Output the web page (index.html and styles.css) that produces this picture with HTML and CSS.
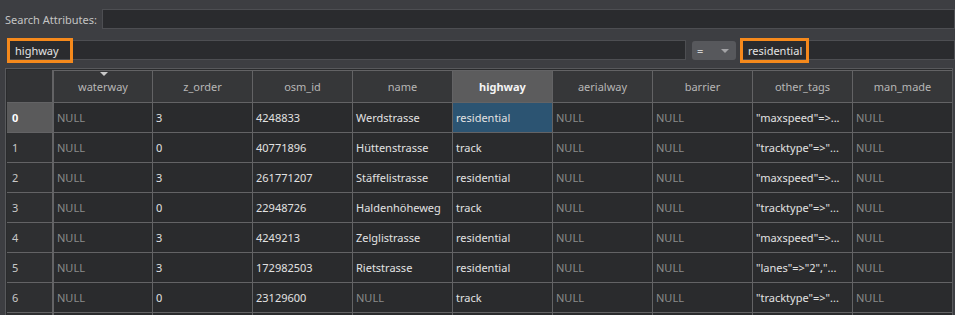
FILE: index.html
```
<!doctype html>
<html>
    <head>
        <title>Attribute table</title>
        <meta charset="utf-8">
        <link rel="stylesheet" href="styles.css">
    </head>

    <body>
        <div class="search-row">
            <label class="search-label">Search Attributes:</label>
            <div class="field"></div>
        </div>

        <div class="filter-row">
            <div class="field field-column"><span class="mark mark-column">highway</span></div>
            <div class="combo"><span>=</span><i class="combo-arrow"></i></div>
            <div class="field field-value"><span class="mark mark-value">residential</span></div>
        </div>

        <div class="table-frame">
            <table class="attr-table">
                <thead>
                    <tr>
                        <th class="corner"></th>
                        <th class="sorted">waterway</th>
                        <th>z_order</th>
                        <th>osm_id</th>
                        <th>name</th>
                        <th class="current">highway</th>
                        <th>aerialway</th>
                        <th>barrier</th>
                        <th>other_tags</th>
                        <th>man_made</th>
                    </tr>
                </thead>
                <tbody>
                    <tr>
                        <th class="current">0</th>
                        <td class="null">NULL</td><td>3</td><td>4248833</td><td>Werdstrasse</td>
                        <td class="selected">residential</td><td class="null">NULL</td><td class="null">NULL</td>
                        <td>"maxspeed"=&gt;...</td><td class="null">NULL</td>
                    </tr>
                    <tr>
                        <th>1</th>
                        <td class="null">NULL</td><td>0</td><td>40771896</td><td>Hüttenstrasse</td>
                        <td>track</td><td class="null">NULL</td><td class="null">NULL</td>
                        <td>"tracktype"=&gt;"...</td><td class="null">NULL</td>
                    </tr>
                    <tr>
                        <th>2</th>
                        <td class="null">NULL</td><td>3</td><td>261771207</td><td>Stäffelistrasse</td>
                        <td>residential</td><td class="null">NULL</td><td class="null">NULL</td>
                        <td>"maxspeed"=&gt;...</td><td class="null">NULL</td>
                    </tr>
                    <tr>
                        <th>3</th>
                        <td class="null">NULL</td><td>0</td><td>22948726</td><td>Haldenhöheweg</td>
                        <td>track</td><td class="null">NULL</td><td class="null">NULL</td>
                        <td>"tracktype"=&gt;"...</td><td class="null">NULL</td>
                    </tr>
                    <tr>
                        <th>4</th>
                        <td class="null">NULL</td><td>3</td><td>4249213</td><td>Zelglistrasse</td>
                        <td>residential</td><td class="null">NULL</td><td class="null">NULL</td>
                        <td>"maxspeed"=&gt;...</td><td class="null">NULL</td>
                    </tr>
                    <tr>
                        <th>5</th>
                        <td class="null">NULL</td><td>3</td><td>172982503</td><td>Rietstrasse</td>
                        <td>residential</td><td class="null">NULL</td><td class="null">NULL</td>
                        <td>"lanes"=&gt;"2","...</td><td class="null">NULL</td>
                    </tr>
                    <tr>
                        <th>6</th>
                        <td class="null">NULL</td><td>0</td><td>23129600</td><td class="null">NULL</td>
                        <td>track</td><td class="null">NULL</td><td class="null">NULL</td>
                        <td>"tracktype"=&gt;"...</td><td class="null">NULL</td>
                    </tr>
                    <tr class="clipped">
                        <th></th>
                        <td></td><td></td><td></td><td></td>
                        <td></td><td></td><td></td>
                        <td></td><td></td>
                    </tr>
                </tbody>
            </table>
        </div>
    </body>
</html>
```

FILE: styles.css
```
body{
    margin: 0;
    padding: 0;
    height: 315px;
    overflow: hidden;
    background: #3d3e42;
    color: #dcdcdc;
    font-family: "Noto Sans", "Open Sans", sans-serif;
    font-size: 11px;
}

.search-row{
    display: flex;
    align-items: center;
    padding: 9px 0 0 5px;
}

.search-label{
    width: 97px;
    white-space: nowrap;
    color: #c4c4c4;
}

.field{
    flex: 1;
    height: 18px;
    border: 1px solid #4d4e52;
    background: #2a2b2e;
    display: flex;
    align-items: center;
}

.filter-row{
    display: flex;
    align-items: center;
    gap: 6px;
    margin-top: 11px;
    padding-left: 7px;
}

.field-column{
    flex: none;
    width: 677px;
}

.field-value{
    margin-left: -2px;
}

.mark{
    flex: none;
    height: 19px;
    line-height: 19px;
    padding-left: 5px;
    margin-left: -1px;
    border: 3px solid #f5891c;
    color: #e4e4e4;
}

.mark-column{
    padding-right: 11px;
}

.mark-value{
    padding-right: 4px;
}

.combo{
    position: relative;
    width: 44px;
    height: 19px;
    border-radius: 3px;
    background: #57585c;
    display: flex;
    align-items: center;
    padding-left: 5px;
    box-sizing: border-box;
    color: #d0d0d0;
}

.combo-arrow{
    position: absolute;
    right: 7px;
    top: 8px;
    border-left: 4px solid transparent;
    border-right: 4px solid transparent;
    border-top: 4px solid #a3a3a6;
}

.table-frame{
    margin: 8px 2px 0 5px;
    border: 1px solid #58595c;
    padding: 1px 0 0 1px;
    background: #2a2b2d;
    height: 250px;
    overflow: hidden;
}

.attr-table{
    border-collapse: separate;
    border-spacing: 0;
    table-layout: fixed;
    width: 946px;
}

.attr-table th,
.attr-table td{
    box-sizing: border-box;
    border-right: 1px solid #636365;
    border-bottom: 1px solid #636365;
    white-space: nowrap;
    overflow: hidden;
}

.attr-table thead th{
    width: 100px;
    height: 33px;
    background: #363739;
    color: #b6b6b6;
    font-weight: normal;
    text-align: center;
    border-top: 1px solid #636365;
}

.attr-table thead th.corner{
    width: 46px;
    background: #323335;
    border-top: none;
}

.attr-table thead th.sorted{
    position: relative;
    border-left: 1px solid #636365;
}

.attr-table thead th.sorted::before{
    content: "";
    position: absolute;
    top: 1px;
    left: 46px;
    border-left: 4px solid transparent;
    border-right: 4px solid transparent;
    border-top: 4px solid #c9c9c9;
}

.attr-table thead th.current{
    background: #5c5c5d;
    color: #f4f4f4;
    font-weight: bold;
}

.attr-table tbody th{
    height: 30px;
    padding-left: 5px;
    text-align: left;
    font-weight: normal;
    color: #c8c8c8;
    background: #2e2f31;
}

.attr-table tbody th.current{
    background: #5a5a5b;
    color: #ffffff;
    font-weight: bold;
}

.attr-table td{
    height: 30px;
    padding-left: 3px;
    background: #2a2b2d;
    color: #e2e2e2;
}

.attr-table td:first-of-type{
    border-left: 1px solid #636365;
}

.attr-table td.null{
    color: #8b8b8b;
}

.attr-table td.selected{
    background: #2c5472;
}
```
